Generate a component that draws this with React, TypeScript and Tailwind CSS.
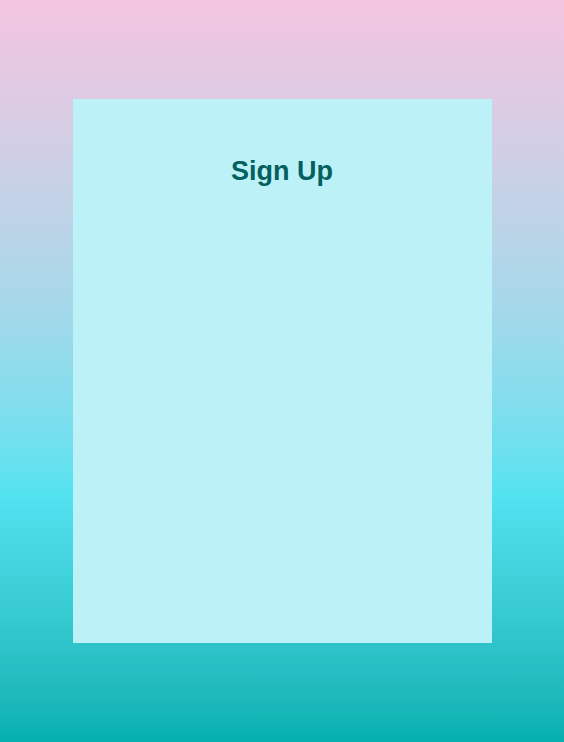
export default function App() {
  return (
    <div className="min-h-screen flex items-center justify-center bg-gradient-to-b from-[#f4c4e0] via-[#52e2f0] via-67% to-[#04b0b0] font-['Liberation_Sans',Arial,sans-serif]">
      <div className="w-[419px] h-[544px] bg-[#bcf2f7] flex flex-col items-center pt-[57px]">
        <h1 className="text-[27px] font-bold text-[#03605f] leading-[1.15]">Sign Up</h1>
      </div>
    </div>
  );
}
